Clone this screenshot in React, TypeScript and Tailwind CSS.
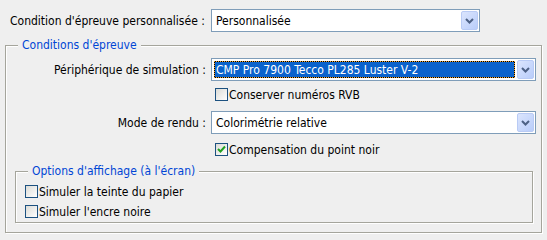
import React from 'react';

const font = { fontFamily: '"DejaVu Sans Condensed", "Liberation Sans", sans-serif' };

function Chevron() {
  return (
    <svg width="9" height="6" viewBox="0 0 9 6">
      <path d="M1 1 L4.5 4.5 L8 1" fill="none" stroke="#4d6185" strokeWidth="2" />
    </svg>
  );
}

function Select({ value, width, selected }: { value: string; width: string; selected?: boolean }) {
  return (
    <div className={`${width} h-[23px] border border-[#7f9db9] bg-white flex items-center`}>
      <div className="flex-1 flex items-center h-full pl-[2px] pr-[2px]">
        {selected ? (
          <div className="flex-1 h-[17px] bg-black">
            <div className="h-full border border-dotted border-[#f2a634] bg-[#0a62cc] bg-clip-padding text-white flex items-center pl-[1px] leading-none">
              {value}
            </div>
          </div>
        ) : (
          <span className="pl-[2px] leading-none">{value}</span>
        )}
      </div>
      <div className="w-[17px] h-[19px] mr-[1px] rounded-[2px] border border-[#b9cbf5] bg-gradient-to-br from-[#dbe5fd] to-[#b9cdfa] flex items-center justify-center">
        <Chevron />
      </div>
    </div>
  );
}

function Checkbox({ label, checked }: { label: string; checked?: boolean }) {
  return (
    <div className="flex items-center h-[13px]">
      <span className="w-[13px] h-[13px] border border-[#1c5180] bg-gradient-to-br from-[#dcdcd7] to-white flex items-center justify-center">
        {checked && (
          <svg width="11" height="11" viewBox="0 0 11 11">
            <path d="M2 5 L4.5 7.5 L9 2.5" fill="none" stroke="#21a121" strokeWidth="2" />
          </svg>
        )}
      </span>
      <span className="ml-[1px] leading-none">{label}</span>
    </div>
  );
}

function Legend({ children }: { children: React.ReactNode }) {
  return (
    <span className="absolute left-[12px] -top-[8px] px-[4px] bg-[#efefef] text-[#0046d5] leading-[14px]">
      {children}
    </span>
  );
}

export default function App() {
  return (
    <div className="w-[547px] h-[240px] bg-[#efefef] text-[12px] text-black overflow-hidden" style={font}>
      <div className="flex items-center pt-[9px]">
        <span className="w-[211px] pl-[10px]">Condition d'épreuve personnalisée :</span>
        <Select value="Personnalisée" width="w-[269px]" />
      </div>

      <div className="relative ml-[5px] mt-[13px] w-[537px] h-[188px] border border-[#a5a59c] shadow-[1px_1px_0_#fff,inset_1px_1px_0_#fff]">
        <Legend>Conditions d'épreuve</Legend>

        <div className="grid grid-cols-[200px_auto] gap-x-[5px] items-center mt-[12px]">
          <span className="text-right">Périphérique de simulation :</span>
          <Select value="CMP Pro 7900 Tecco PL285 Luster V-2" width="w-[325px]" selected />
          <span />
          <div className="mt-[7px] ml-[4px]">
            <Checkbox label="Conserver numéros RVB" />
          </div>
          <span className="text-right mt-[10px]">Mode de rendu :</span>
          <div className="mt-[10px]">
            <Select value="Colorimétrie relative" width="w-[325px]" />
          </div>
          <span />
          <div className="mt-[9px] ml-[4px]">
            <Checkbox label="Compensation du point noir" checked />
          </div>
        </div>

        <div className="relative ml-[9px] mt-[15px] w-[518px] h-[52px] border border-[#a5a59c] shadow-[1px_1px_0_#fff,inset_1px_1px_0_#fff]">
          <Legend>Options d'affichage (à l'écran)</Legend>
          <div className="flex flex-col gap-[7px] pt-[13px] pl-[9px]">
            <Checkbox label="Simuler la teinte du papier" />
            <Checkbox label="Simuler l'encre noire" />
          </div>
        </div>
      </div>
    </div>
  );
}
